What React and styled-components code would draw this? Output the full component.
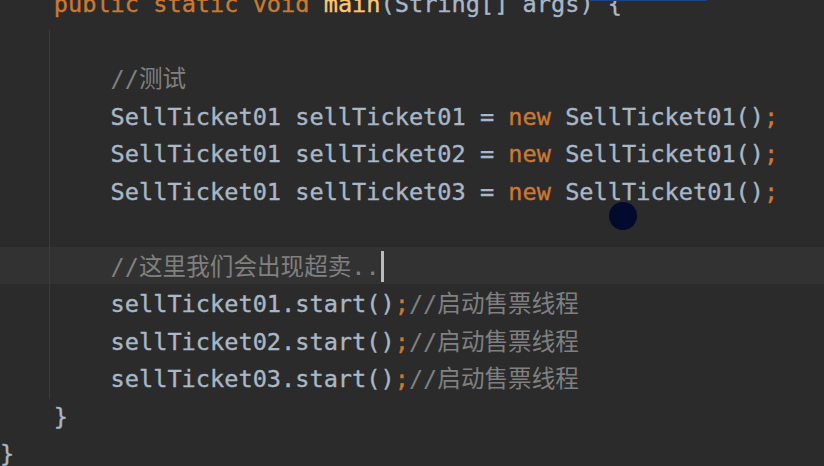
import React from 'react'
import styled, { createGlobalStyle } from 'styled-components'

const GlobalStyle = createGlobalStyle`
  html, body {
    margin: 0;
    padding: 0;
    width: 824px;
    height: 466px;
    overflow: hidden;
    background: #2b2b2b;
  }
`

const Editor = styled.div`
  position: relative;
  width: 824px;
  height: 466px;
  overflow: hidden;
  background: #2b2b2b;
  font-family: "DejaVu Sans Mono", "Liberation Mono", "Noto Sans CJK SC", monospace;
  font-size: 23.6px;
  color: #a9b7c6;
  -webkit-text-stroke: 0.35px currentColor;
`

const Code = styled.div`
  margin-top: -16px;
  display: flex;
  flex-direction: column;
`

const Line = styled.div`
  box-sizing: border-box;
  height: 37.5px;
  padding-top: 3px;
  line-height: 34.5px;
  white-space: pre;
  padding-left: ${p => p.$indent * 14.2 - 3}px;
  background: ${p => (p.$current ? '#323232' : 'transparent')};
`

const Block = styled.div`
  position: relative;

  &::before {
    content: '';
    position: absolute;
    left: 49px;
    top: 8px;
    bottom: -2px;
    width: 1px;
    background: #3b3b3b;
  }
`

const Kw = styled.span`
  color: #cc7832;
`

const Fn = styled.span`
  color: #ffc66d;
`

const Semi = styled.span`
  color: #cc7832;
`

const Comment = styled.span`
  color: #808080;
  -webkit-text-stroke: 0;
  font-family: "DejaVu Sans Mono", "Noto Sans CJK SC", monospace;
`

const Caret = styled.span`
  display: inline-block;
  width: 3px;
  height: 31px;
  margin-left: 1px;
  vertical-align: -7px;
  background: #bbbbbb;
`

const Pointer = styled.div`
  position: absolute;
  left: 609px;
  top: 202px;
  width: 28px;
  height: 28px;
  border-radius: 50%;
  background: #020a2e;
`

const TopMark = styled.div`
  position: absolute;
  left: 590px;
  top: 0;
  width: 117px;
  height: 1px;
  background: #214283;
`

const App = () => {
  return (
    <>
      <GlobalStyle />
      <Editor>
        <Code>
          <Line $indent={4}>
            <Kw>public static void </Kw><Fn>main</Fn>(String[] args) {'{'}
          </Line>
          <Block>
            <Line $indent={8}> </Line>
            <Line $indent={8}><Comment>//测试</Comment></Line>
            <Line $indent={8}>SellTicket01 sellTicket01 = <Kw>new</Kw> SellTicket01()<Semi>;</Semi></Line>
            <Line $indent={8}>SellTicket01 sellTicket02 = <Kw>new</Kw> SellTicket01()<Semi>;</Semi></Line>
            <Line $indent={8}>SellTicket01 sellTicket03 = <Kw>new</Kw> SellTicket01()<Semi>;</Semi></Line>
            <Line $indent={8}> </Line>
            <Line $indent={8} $current><Comment>//这里我们会出现超卖..</Comment><Caret /></Line>
            <Line $indent={8}>sellTicket01.start()<Semi>;</Semi><Comment>//启动售票线程</Comment></Line>
            <Line $indent={8}>sellTicket02.start()<Semi>;</Semi><Comment>//启动售票线程</Comment></Line>
            <Line $indent={8}>sellTicket03.start()<Semi>;</Semi><Comment>//启动售票线程</Comment></Line>
          </Block>
          <Line $indent={4}>{'}'}</Line>
          <Line $indent={0}>{'}'}</Line>
        </Code>
        <TopMark />
        <Pointer />
      </Editor>
    </>
  )
}

export default App
